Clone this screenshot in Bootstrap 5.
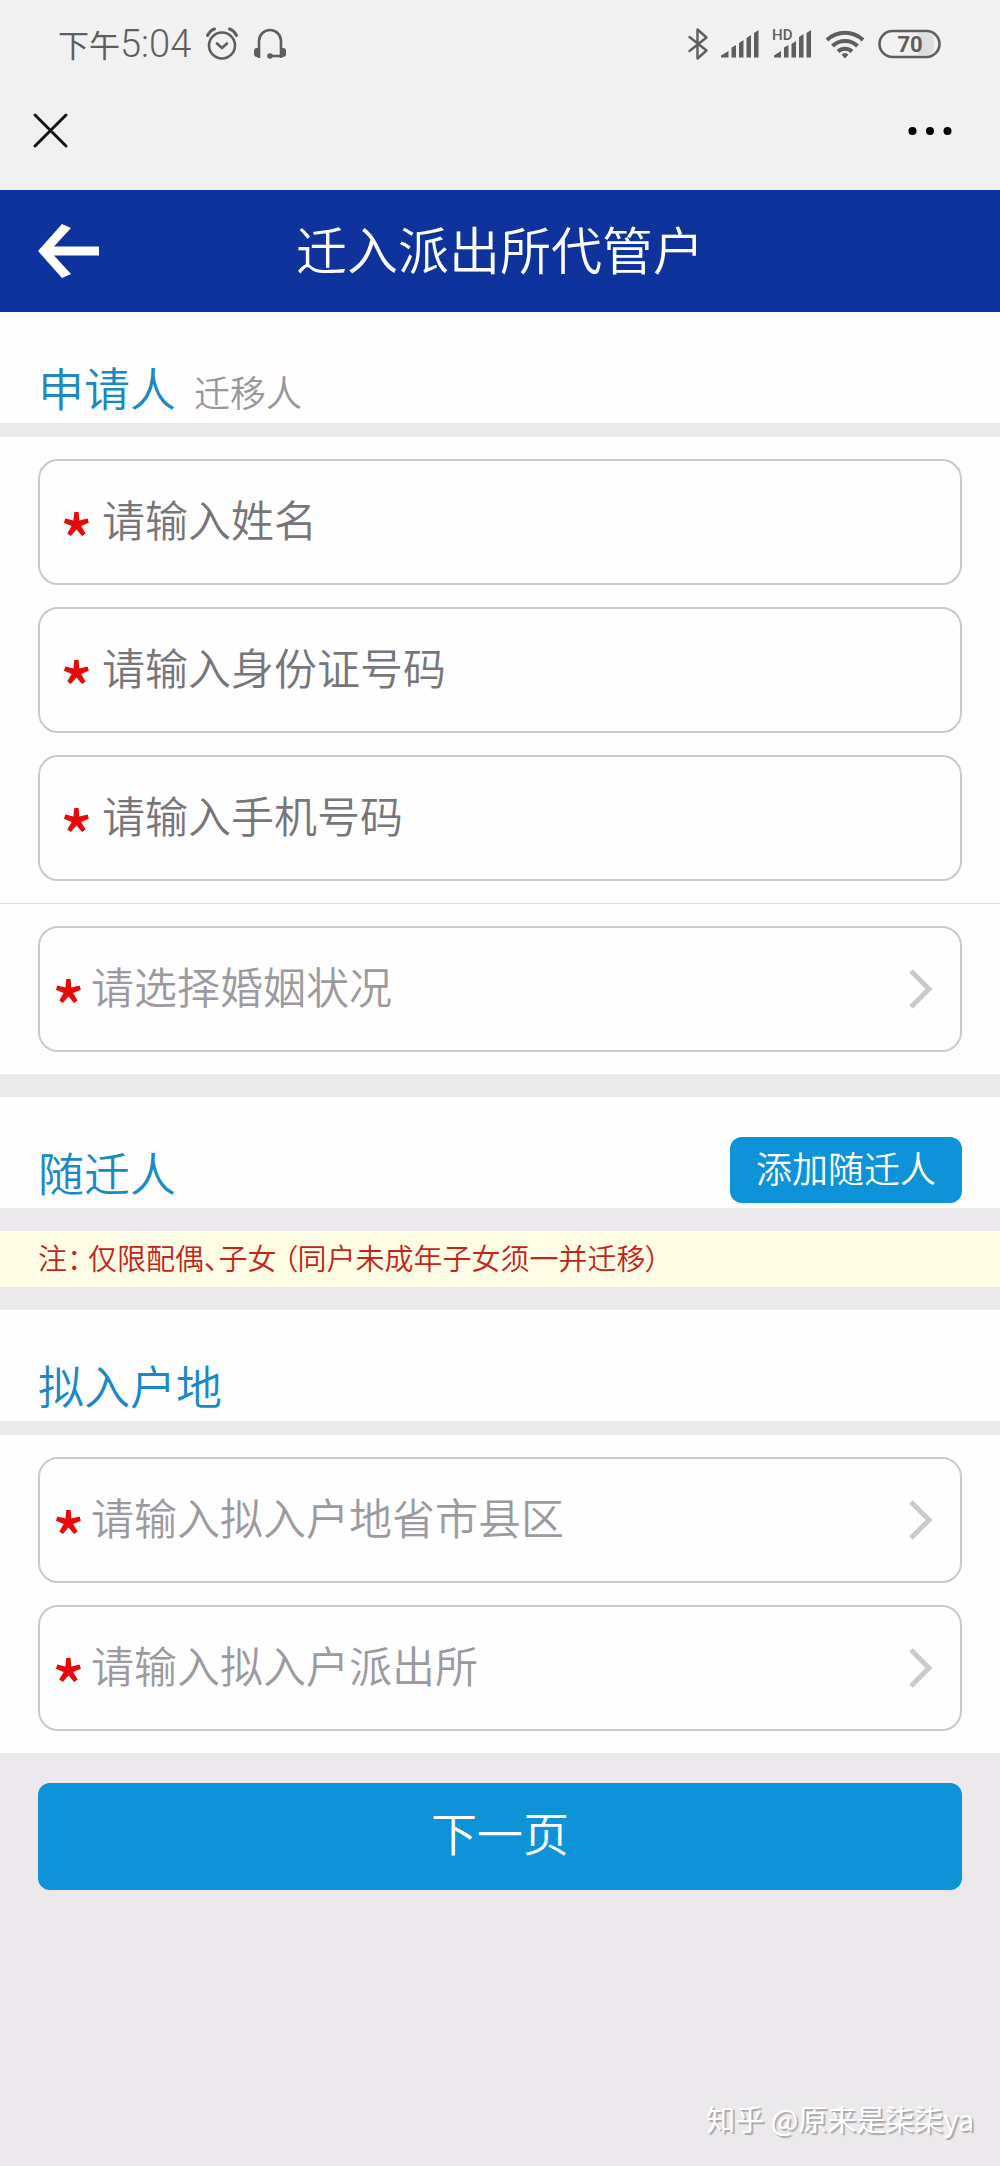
<!DOCTYPE html>
<html lang="zh-CN">
<head>
<meta charset="utf-8">
<meta name="viewport" content="width=device-width, initial-scale=1">
<title>迁入派出所代管户</title>
<link href="https://cdn.jsdelivr.net/npm/bootstrap@5.3.0/dist/css/bootstrap.min.css" rel="stylesheet">
<style>
  body { background: #ebe9ec; font-family: "Noto Sans CJK SC", sans-serif; font-weight: 350; }
  svg { display: block; flex: none; overflow: visible; }
  .status-bar { background: #f1f1f1; color: #5e5e5e; height: 88px; padding: 0 58px; }
  .clock { font-size: 31px; line-height: 40px; font-weight: 400; }
  .clock-digits { font-family: Roboto, sans-serif; font-size: 38px; font-weight: 300; }
  .status-left { gap: 15px; }
  .status-right { gap: 13px; }
  .app-bar { background: #f1f1f1; height: 102px; padding: 0 48px 18px 33px; }
  .bare { border: 0; background: none; padding: 0; }
  .page-head { background: #0e339d; color: #fff; min-height: 122px; padding: 0 38px; display: grid; grid-template-columns: 62px 1fr 62px; align-items: center; }
  .page-head h1 { font-size: 51px; line-height: 60px; font-weight: 350; padding-bottom: 6px; }
  .section-head { background: #fefefe; min-height: 111px; padding: 0 38px 5px; }
  .section-head h2 { font-size: 46px; line-height: 48px; font-weight: 350; color: #1a89c4; margin: 0 0 8px; }
  .sub-head { font-size: 36px; line-height: 44px; color: #99979a; margin: 0 0 5px 18px; }
  .panel { background: #fefefe; padding: 22px 38px; }
  .stack { gap: 22px; }
  .field { border: 2px solid #cbc9cc; border-radius: 20px; height: 126px; padding: 0 27px 0 20px; background: #fefefe; }
  .field-pick { padding-left: 12px; }
  .star { color: #e60a0a; font-size: 68px; font-weight: 500; line-height: 60px; width: 30px; text-align: center; padding-top: 30px; }
  .field .form-control, .field .form-select { border: 0; box-shadow: none; background: none; border-radius: 0; font-size: 43px; line-height: 60px; font-weight: 350; padding: 0 0 8px; }
  .field .form-control { color: #77757a; margin-left: 12px; }
  .field .form-control::placeholder { color: #777579; opacity: 1; }
  .field .form-select { color: #9c9a9e; margin-left: 9px; }
  .rule-top { border-top: 1px solid #e2e0e3; }
  .btn-blue { background: #0e92d8; color: #fff; border: 0; border-radius: 12px; font-weight: 350; }
  .btn-blue:hover { background: #0c84c4; color: #fff; }
  .btn-add { font-size: 36px; line-height: 44px; padding: 8px 26px 14px; }
  .btn-next { font-size: 46px; line-height: 60px; padding: 18px 0 29px; }
  .note { background: #fffee4; color: #c3231b; font-size: 29px; line-height: 40px; padding: 6px 38px 10px; font-feature-settings: "palt"; }
  .gap-s { height: 14px; }
  .gap-m { height: 23px; }
  .actions { padding: 30px 38px; }
  .watermark { color: #fff; font-size: 29px; line-height: 40px; font-weight: 400; text-shadow: 2px 2px 1px #a9a7aa; padding: 0 26px 28px; }
</style>
<script src="https://cdn.jsdelivr.net/npm/bootstrap@5.3.0/dist/js/bootstrap.bundle.min.js"></script>
</head>
<body class="d-flex flex-column min-vh-100">

<div class="status-bar d-flex align-items-center justify-content-between">
  <div class="status-left d-flex align-items-center">
    <div class="clock">下午<span class="clock-digits">5:04</span></div>
    <svg width="32" height="34" viewBox="0 0 32 34" fill="none" stroke="#5e5e5e" stroke-width="2.6" stroke-linecap="round">
      <circle cx="16" cy="18.500" r="13"/><path d="M11 16.500l5 4.500 5-4.500"/><path d="M1.500 8.500C3 5.500 5.500 3 8.500 2M30.500 8.500C29 5.500 26.500 3 23.500 2" stroke-width="3"/>
    </svg>
    <svg width="34" height="32" viewBox="0 0 34 32" fill="none" stroke="#5e5e5e" stroke-width="2.6">
      <path d="M6 30V13a11 11 0 0 1 22 0V30M17 28H29"/><path d="M6 20H4a3 3 0 0 0-3 3v3a3 3 0 0 0 3 3h2zM28 20h2a3 3 0 0 1 3 3v3a3 3 0 0 1-3 3h-2z" fill="#5e5e5e" stroke="none"/><circle cx="17" cy="28" r="2.800" fill="#5e5e5e" stroke="none"/>
    </svg>
  </div>
  <div class="status-right d-flex align-items-center">
    <svg width="20" height="32" viewBox="0 0 20 32" fill="none" stroke="#5e5e5e" stroke-width="2.400" stroke-linejoin="round" stroke-linecap="round"><path d="M1.500 9l17 13.500-9 8V1.500l9 8L1.500 23"/></svg>
    <svg width="38" height="30" viewBox="0 0 38 30" fill="#5e5e5e"><path d="M0 28.500v-2l7.500-4.500v6.500zM10.500 18.500l4.500-2.500v12.500h-4.500zM18 14l4.500-3v17.500H18zM25.500 9l4.500-3v22.500h-4.500zM33 4l4.500-3v27.500H33z"/></svg>
    <svg width="40" height="32" viewBox="0 0 40 32" fill="#5e5e5e"><path d="M2 29.500v-2l7-4.500v6.500zM12 19.500l4.500-2.500v12.500H12zM19.500 16l4.500-3v16.500h-4.500zM27 9l4.500-3v23.500H27zM34.500 5L39 2v27.500h-4.500z"/><text x="0" y="12" font-family="Roboto, sans-serif" font-size="15" font-weight="500">HD</text></svg>
    <svg width="40" height="30" viewBox="0 0 40 30" fill="none" stroke="#5e5e5e" stroke-width="4"><path d="M2 11a26 26 0 0 1 36 0M7.500 17a18 18 0 0 1 25 0M13 22.500a10.500 10.500 0 0 1 14 0"/><path d="M16.500 25.500q3.500-3 7 0L20 29.500z" fill="#5e5e5e" stroke="none"/></svg>
    <svg width="64" height="30" viewBox="0 0 64 30"><path d="M40 4h9a7 7 0 0 1 7 7v8a7 7 0 0 1-7 7h-9z" fill="#dedede"/><rect x="1.500" y="2" width="60" height="26" rx="13" fill="none" stroke="#5e5e5e" stroke-width="2.600"/><text x="32" y="23" text-anchor="middle" font-family="Roboto, sans-serif" font-size="22" font-weight="700" fill="#5e5e5e">70</text></svg>
  </div>
</div>

<nav class="app-bar d-flex align-items-center justify-content-between">
  <button type="button" class="bare" aria-label="关闭"><svg width="35" height="35" viewBox="0 0 35 35" stroke="#151515" stroke-width="3" stroke-linecap="round"><path d="M2 2l31 31M33 2L2 33"/></svg></button>
  <button type="button" class="bare" aria-label="更多"><svg width="44" height="10" viewBox="0 0 44 10"><circle cx="4.500" cy="6" r="4"/><circle cx="22" cy="6" r="4"/><circle cx="39.500" cy="6" r="4"/></svg></button>
</nav>

<header class="page-head">
  <a href="#" aria-label="返回"><svg width="62" height="56" viewBox="0 0 62 56" fill="#fff"><path d="M0 28L24 1l9 4-17 18.500h45v9H16L33 51l-9 4z"/></svg></a>
  <h1 class="m-0 text-center">迁入派出所代管户</h1>
</header>

<main>
<form>
  <section>
    <div class="section-head d-flex align-items-end">
      <h2>申请人</h2><span class="sub-head">迁移人</span>
    </div>
    <div class="gap-s"></div>
    <div class="panel stack d-flex flex-column">
      <div class="field d-flex align-items-center"><label class="star" for="name">*</label><input class="form-control" id="name" type="text" placeholder="请输入姓名"></div>
      <div class="field d-flex align-items-center"><label class="star" for="idno">*</label><input class="form-control" id="idno" type="text" placeholder="请输入身份证号码"></div>
      <div class="field d-flex align-items-center"><label class="star" for="phone">*</label><input class="form-control" id="phone" type="tel" placeholder="请输入手机号码"></div>
    </div>
    <div class="panel rule-top">
      <div class="field field-pick d-flex align-items-center"><label class="star" for="marital">*</label><select class="form-select" id="marital"><option>请选择婚姻状况</option></select>
        <svg width="24" height="40" viewBox="0 0 24 40" fill="none" stroke="#cbc9cc" stroke-width="5"><path d="M2 2l18 18L2 38"/></svg></div>
    </div>
  </section>
  <div class="gap-m"></div>

  <section>
    <div class="section-head d-flex align-items-end justify-content-between">
      <h2>随迁人</h2>
      <button type="button" class="btn btn-blue btn-add">添加随迁人</button>
    </div>
    <div class="gap-m"></div>
    <p class="note m-0">注： 仅限配偶、子女 （同户未成年子女须一并迁移）</p>
  </section>
  <div class="gap-m"></div>

  <section>
    <div class="section-head d-flex align-items-end">
      <h2>拟入户地</h2>
    </div>
    <div class="gap-s"></div>
    <div class="panel stack d-flex flex-column">
      <div class="field field-pick d-flex align-items-center"><label class="star" for="region">*</label><select class="form-select" id="region"><option>请输入拟入户地省市县区</option></select>
        <svg width="24" height="40" viewBox="0 0 24 40" fill="none" stroke="#cbc9cc" stroke-width="5"><path d="M2 2l18 18L2 38"/></svg></div>
      <div class="field field-pick d-flex align-items-center"><label class="star" for="station">*</label><select class="form-select" id="station"><option>请输入拟入户派出所</option></select>
        <svg width="24" height="40" viewBox="0 0 24 40" fill="none" stroke="#cbc9cc" stroke-width="5"><path d="M2 2l18 18L2 38"/></svg></div>
    </div>
  </section>

  <div class="actions">
    <button type="submit" class="btn btn-blue btn-next w-100">下一页</button>
  </div>
</form>
</main>

<footer class="watermark mt-auto text-end">知乎 @原来是柒柒ya</footer>
</body>
</html>
